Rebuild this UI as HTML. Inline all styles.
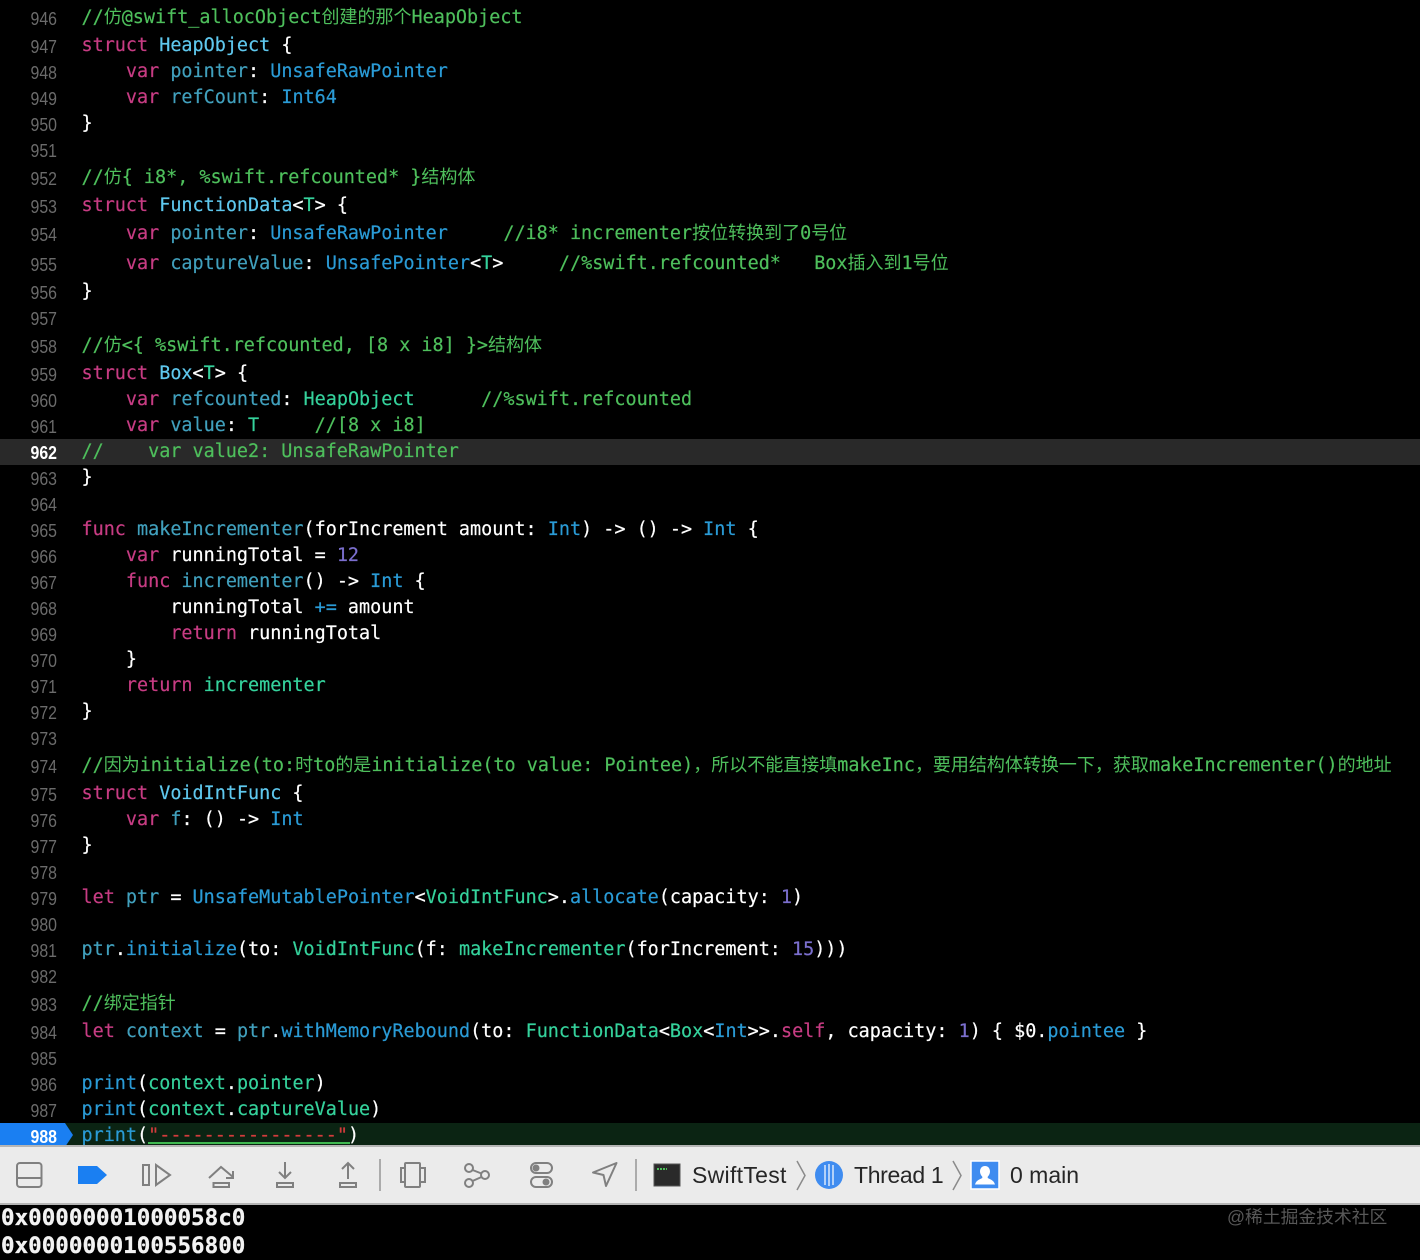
<!DOCTYPE html>
<html lang="zh"><head><meta charset="utf-8"><title>SwiftTest</title>
<style>
html,body{margin:0;padding:0;background:#000;width:1420px;height:1260px;overflow:hidden}
#r{position:relative;width:1420px;height:1260px;overflow:hidden;background:#000}
#w{position:absolute;left:0;top:1px;width:1420px;height:1140px}
.l{position:absolute;left:81.5px;height:26px;font:400 18.46px/26px "DejaVu Sans Mono","Liberation Mono","Noto Sans CJK SC",monospace;color:#fff;white-space:pre;margin:0;-webkit-text-stroke:.2px currentColor}
.n{position:absolute;left:10px;width:47px;text-align:right;height:26px;font:400 18px/26px "Liberation Sans",sans-serif;color:#6b6b6b;transform:scaleX(.88);transform-origin:right center}
.c{color:#4ebf5c}.k{color:#c73c83}.d{color:#5fc8ee}.t{color:#2a9bd6}.p{color:#41a0bd}.g{color:#35d29c}.f{color:#41a0bd}.m{color:#7b6fce}.s{color:#d23c3c}
i{font:normal 18px/0 "Noto Sans CJK SC",sans-serif;-webkit-text-stroke:0}
.ui{position:absolute;font:400 23px/30px "Liberation Sans",sans-serif;color:#262626}
.o{position:absolute;left:1px;font:700 22.55px/28px "DejaVu Sans Mono","Liberation Mono",monospace;color:#f2f2f2;white-space:pre;-webkit-text-stroke:.3px currentColor}
</style></head><body><div id="r">
<div style="position:absolute;left:0;top:439px;width:1420px;height:26px;background:#292929"></div>
<div style="position:absolute;left:0;top:1123px;width:1420px;height:24px;background:#0b2413"></div>
<svg style="position:absolute;left:0;top:1123px" width="74" height="24"><path d="M0 0H65L73 12L65 24H0Z" fill="#1a7ff2"/></svg>
<div id="w">
<div class="n" style="top:5px">946</div><div class="l c" style="top:4px">//<i>仿</i>@swift_allocObject<i>创建的那个</i>HeapObject</div>
<div class="n" style="top:33px">947</div><div class="l" style="top:32px"><span class="k">struct</span> <span class="d">HeapObject</span> {</div>
<div class="n" style="top:59px">948</div><div class="l" style="top:58px">    <span class="k">var</span> <span class="p">pointer</span>: <span class="t">UnsafeRawPointer</span></div>
<div class="n" style="top:85px">949</div><div class="l" style="top:84px">    <span class="k">var</span> <span class="p">refCount</span>: <span class="t">Int64</span></div>
<div class="n" style="top:111px">950</div><div class="l" style="top:110px">}</div>
<div class="n" style="top:137px">951</div>
<div class="n" style="top:165px">952</div><div class="l c" style="top:164px">//<i>仿</i>{ i8*, %swift.refcounted* }<i>结构体</i></div>
<div class="n" style="top:193px">953</div><div class="l" style="top:192px"><span class="k">struct</span> <span class="d">FunctionData</span>&lt;<span class="g">T</span>&gt; {</div>
<div class="n" style="top:221px">954</div><div class="l" style="top:220px">    <span class="k">var</span> <span class="p">pointer</span>: <span class="t">UnsafeRawPointer</span>     <span class="c">//i8* incrementer<i>按位转换到了</i>0<i>号位</i></span></div>
<div class="n" style="top:251px">955</div><div class="l" style="top:250px">    <span class="k">var</span> <span class="p">captureValue</span>: <span class="t">UnsafePointer</span>&lt;<span class="g">T</span>&gt;     <span class="c">//%swift.refcounted*   Box<i>插入到</i>1<i>号位</i></span></div>
<div class="n" style="top:279px">956</div><div class="l" style="top:278px">}</div>
<div class="n" style="top:305px">957</div>
<div class="n" style="top:333px">958</div><div class="l c" style="top:332px">//<i>仿</i>&lt;{ %swift.refcounted, [8 x i8] }&gt;<i>结构体</i></div>
<div class="n" style="top:361px">959</div><div class="l" style="top:360px"><span class="k">struct</span> <span class="d">Box</span>&lt;<span class="g">T</span>&gt; {</div>
<div class="n" style="top:387px">960</div><div class="l" style="top:386px">    <span class="k">var</span> <span class="p">refcounted</span>: <span class="g">HeapObject</span>      <span class="c">//%swift.refcounted</span></div>
<div class="n" style="top:413px">961</div><div class="l" style="top:412px">    <span class="k">var</span> <span class="p">value</span>: <span class="g">T</span>     <span class="c">//[8 x i8]</span></div>
<div class="n" style="top:439px;color:#fff;font-weight:700">962</div><div class="l c" style="top:438px">//    var value2: UnsafeRawPointer</div>
<div class="n" style="top:465px">963</div><div class="l" style="top:464px">}</div>
<div class="n" style="top:491px">964</div>
<div class="n" style="top:517px">965</div><div class="l" style="top:516px"><span class="k">func</span> <span class="f">makeIncrementer</span>(forIncrement amount: <span class="t">Int</span>) -&gt; () -&gt; <span class="t">Int</span> {</div>
<div class="n" style="top:543px">966</div><div class="l" style="top:542px">    <span class="k">var</span> runningTotal = <span class="m">12</span></div>
<div class="n" style="top:569px">967</div><div class="l" style="top:568px">    <span class="k">func</span> <span class="f">incrementer</span>() -&gt; <span class="t">Int</span> {</div>
<div class="n" style="top:595px">968</div><div class="l" style="top:594px">        runningTotal <span class="t">+=</span> amount</div>
<div class="n" style="top:621px">969</div><div class="l" style="top:620px">        <span class="k">return</span> runningTotal</div>
<div class="n" style="top:647px">970</div><div class="l" style="top:646px">    }</div>
<div class="n" style="top:673px">971</div><div class="l" style="top:672px">    <span class="k">return</span> <span class="g">incrementer</span></div>
<div class="n" style="top:699px">972</div><div class="l" style="top:698px">}</div>
<div class="n" style="top:725px">973</div>
<div class="n" style="top:753px">974</div><div class="l c" style="top:752px">//<i>因为</i>initialize(to:<i>时</i>to<i>的是</i>initialize(to value: Pointee)<i>，所以不能直接填</i>makeInc<i>，要用结构体转换一下，获取</i>makeIncrementer()<i>的地址</i></div>
<div class="n" style="top:781px">975</div><div class="l" style="top:780px"><span class="k">struct</span> <span class="d">VoidIntFunc</span> {</div>
<div class="n" style="top:807px">976</div><div class="l" style="top:806px">    <span class="k">var</span> <span class="p">f</span>: () -&gt; <span class="t">Int</span></div>
<div class="n" style="top:833px">977</div><div class="l" style="top:832px">}</div>
<div class="n" style="top:859px">978</div>
<div class="n" style="top:885px">979</div><div class="l" style="top:884px"><span class="k">let</span> <span class="p">ptr</span> = <span class="t">UnsafeMutablePointer</span>&lt;<span class="g">VoidIntFunc</span>&gt;.<span class="t">allocate</span>(capacity: <span class="m">1</span>)</div>
<div class="n" style="top:911px">980</div>
<div class="n" style="top:937px">981</div><div class="l" style="top:936px"><span class="f">ptr</span>.<span class="t">initialize</span>(to: <span class="g">VoidIntFunc</span>(f: <span class="g">makeIncrementer</span>(forIncrement: <span class="m">15</span>)))</div>
<div class="n" style="top:963px">982</div>
<div class="n" style="top:991px">983</div><div class="l c" style="top:990px">//<i>绑定指针</i></div>
<div class="n" style="top:1019px">984</div><div class="l" style="top:1018px"><span class="k">let</span> <span class="p">context</span> = <span class="f">ptr</span>.<span class="t">withMemoryRebound</span>(to: <span class="g">FunctionData</span>&lt;<span class="g">Box</span>&lt;<span class="t">Int</span>&gt;&gt;.<span class="k">self</span>, capacity: <span class="m">1</span>) { $0.<span class="t">pointee</span> }</div>
<div class="n" style="top:1045px">985</div>
<div class="n" style="top:1071px">986</div><div class="l" style="top:1070px"><span class="t">print</span>(<span class="g">context</span>.<span class="g">pointer</span>)</div>
<div class="n" style="top:1097px">987</div><div class="l" style="top:1096px"><span class="t">print</span>(<span class="g">context</span>.<span class="g">captureValue</span>)</div>
<div class="n" style="top:1123px;color:#fff;font-weight:700">988</div><div class="l" style="top:1122px"><span class="t">print</span>(<span class="s">"----------------"</span>)</div>
</div>
<div style="position:absolute;left:148px;top:1142px;width:202px;height:2px;background:#3fb950"></div>

<div style="position:absolute;left:0;top:1145px;width:1420px;height:60px;background:#ebebeb;border-top:2px solid #b5b5b5;border-bottom:2px solid #b5b5b5;box-sizing:border-box"></div>
<svg style="position:absolute;left:0;top:1145px" width="1010" height="60" viewBox="0 1145 1010 60" fill="none" stroke="#808080" stroke-width="2">
<rect x="17" y="1163" width="24.500" height="24" rx="3"/><path d="M17 1178H41"/>
<path d="M78 1166H97L107 1175L97 1184H78Z" fill="#1a7ff2" stroke="none"/>
<rect x="143" y="1165" width="6" height="20"/><path d="M156 1165L170 1175L156 1185Z"/>
<path d="M209 1178L221 1167L233 1177M233 1171V1178H226"/><rect x="213.500" y="1183" width="15.500" height="4"/>
<path d="M285 1162V1178M279 1172L285 1178L291 1172"/><rect x="277" y="1183" width="16" height="4"/>
<path d="M348 1163V1179M342 1169L348 1163L354 1169"/><rect x="340" y="1183" width="16" height="4"/>
<path d="M380 1159V1191M636 1159V1191" stroke="#ababab"/>
<rect x="405" y="1163" width="15" height="24" rx="1"/><path d="M405 1168H401V1182H405M420 1168H425V1182H420"/>
<circle cx="469" cy="1168" r="4"/><circle cx="485" cy="1175" r="4"/><circle cx="469" cy="1183" r="4"/><path d="M472.500 1170L481.500 1173.500M472.500 1181L481.500 1177"/>
<rect x="531" y="1163" width="21" height="10" rx="5"/><rect x="531" y="1177" width="21" height="10" rx="5"/><circle cx="536" cy="1168" r="3.500" fill="#808080" stroke="none"/><circle cx="546" cy="1182" r="3.500" fill="#808080" stroke="none"/>
<path d="M593 1172.500L616.500 1163L606 1186L603.500 1175Z" stroke-linejoin="round"/>
<rect x="654" y="1164" width="26" height="22" fill="#2a2a2a" stroke="#555" stroke-width="1"/><path d="M657 1169H667" stroke="#4ebf5c" stroke-dasharray="2 1"/>
<path d="M797 1161L805 1175.500L797 1190M953 1161L961 1175.500L953 1190" stroke="#8a8a8a" stroke-width="1.500"/>
<circle cx="829" cy="1175" r="14" fill="#3f8cf0" stroke="none"/><path d="M825 1165V1185M829 1164V1186M833 1165V1185" stroke="#fff" stroke-width="1.200"/>
<rect x="971" y="1161" width="28" height="28" fill="#3f8cf0" stroke="#fff" stroke-width="1.500"/>
<path d="M985 1166c-3.500 0-5 2.800-5 5.500 0 2 1 4 2.300 5.200v1.300c-2.500 1.500-6 2-7.300 6.500h20c-1.300-4.500-4.800-5-7.300-6.500v-1.300c1.300-1.200 2.300-3.200 2.300-5.200 0-2.700-1.500-5.500-5-5.500z" fill="#fff" stroke="none"/>
</svg>
<div class="ui" style="left:692px;top:1160px;letter-spacing:.3px">SwiftTest</div>
<div class="ui" style="left:854px;top:1160px;letter-spacing:-.35px">Thread 1</div>
<div class="ui" style="left:1010px;top:1160px">0 main</div>
<div class="o" style="top:1204px">0x00000001000058c0</div>
<div class="o" style="top:1232px">0x0000000100556800</div>
<div style="position:absolute;left:1227px;top:1205px;font:400 17.800px/24px 'Liberation Sans','Noto Sans CJK SC',sans-serif;color:#585858">@稀土掘金技术社区</div>
</div></body></html>
